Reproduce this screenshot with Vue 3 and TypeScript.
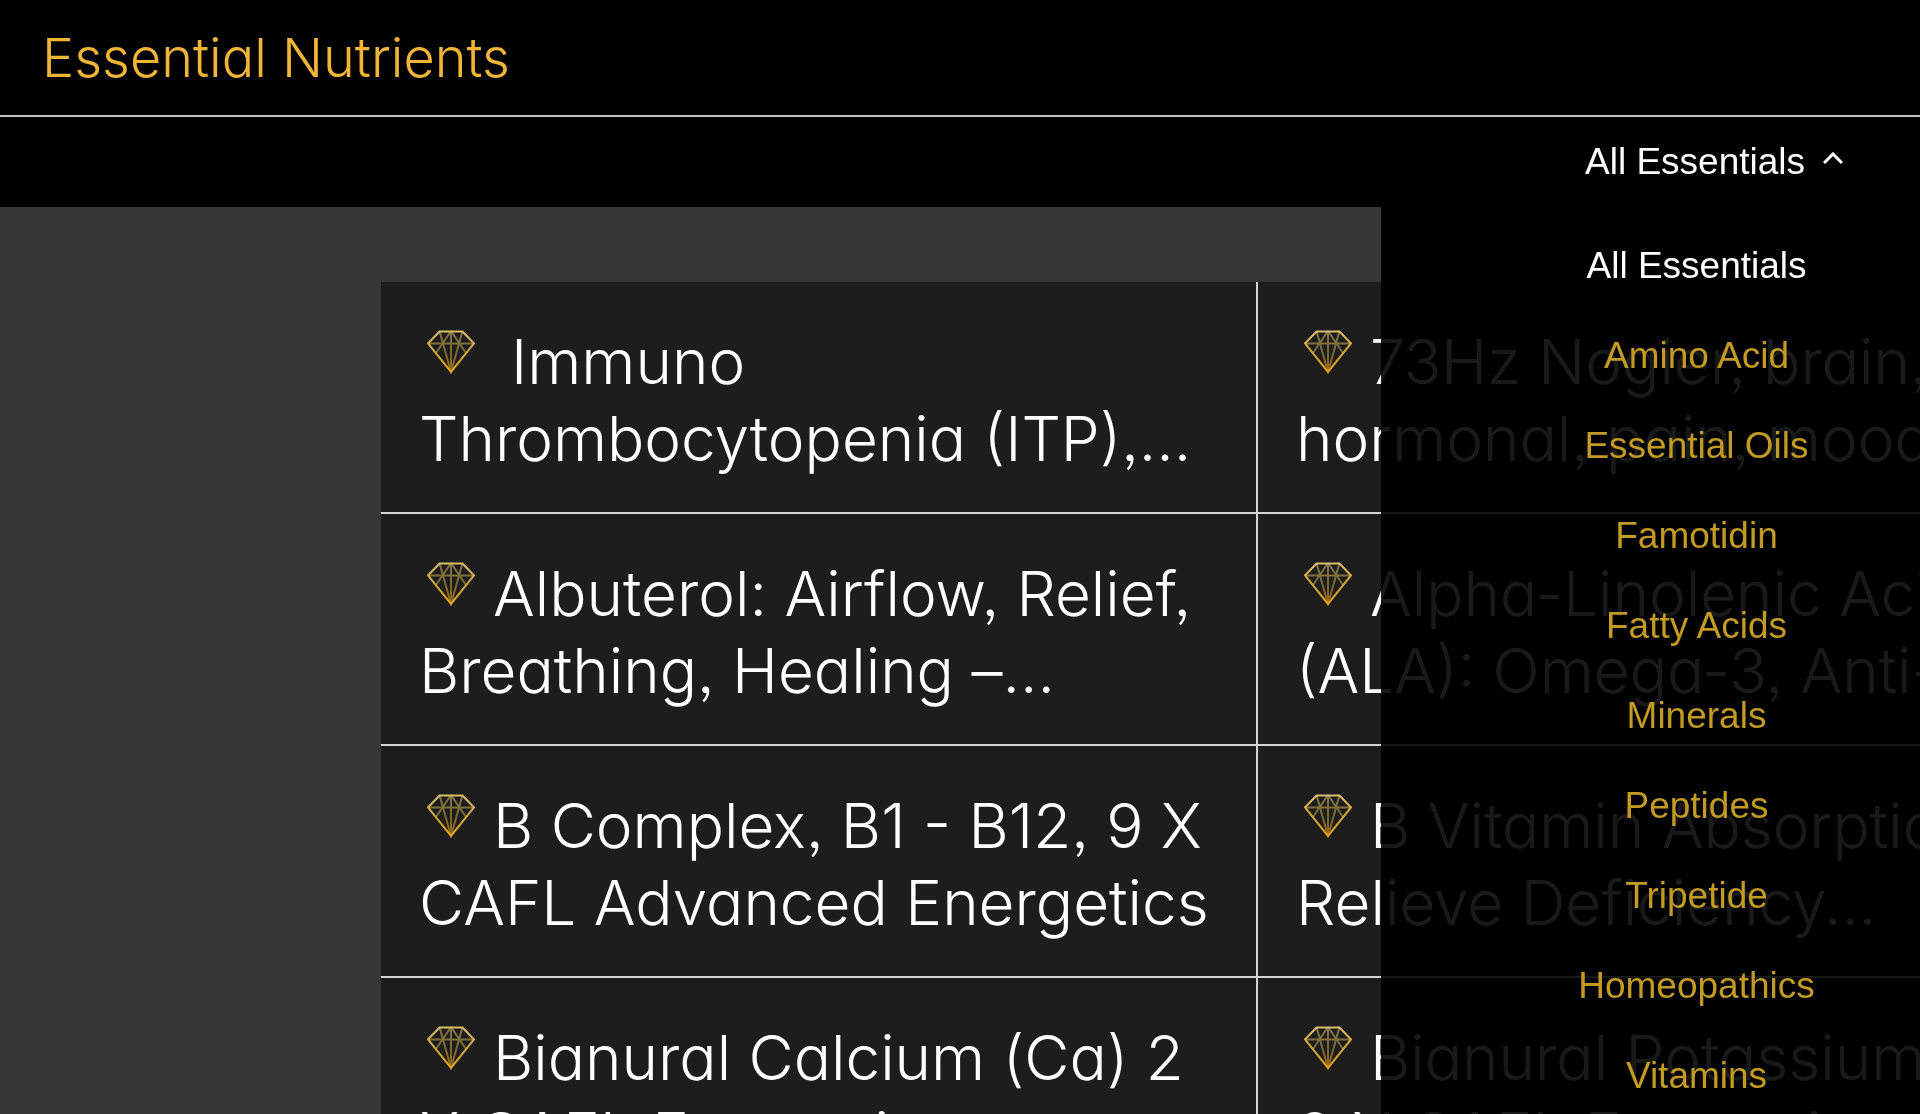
<script setup lang="ts">
import { ref } from 'vue'

interface Card {
  lines: string[]
  wide?: boolean
}

const categories: string[] = [
  'All Essentials',
  'Amino Acid',
  'Essential Oils',
  'Famotidin',
  'Fatty Acids',
  'Minerals',
  'Peptides',
  'Tripetide',
  'Homeopathics',
  'Vitamins',
]

const cards: Card[] = [
  { lines: ['Immuno', 'Thrombocytopenia (ITP),...'], wide: true },
  { lines: ['73Hz Nogier, brain,', 'hormonal, pain, mood'] },
  { lines: ['Albuterol: Airflow, Relief,', 'Breathing, Healing –...'] },
  { lines: ['Alpha-Linolenic Acid', '(ALA): Omega-3, Anti-'] },
  { lines: ['B Complex, B1 - B12, 9 X', 'CAFL Advanced Energetics'] },
  { lines: ['B Vitamin Absorption', 'Relieve Deficiency...'] },
  { lines: ['Bianural Calcium (Ca) 2', 'X CAFL Energetics'] },
  { lines: ['Bianural Potassium', '2 X CAFL Energetics'] },
]

const selected = ref('All Essentials')
const open = ref(true)

function choose(name: string): void {
  selected.value = name
  open.value = false
}
</script>

<template>
  <div class="page">
    <header class="header">
      <h1 class="title">Essential Nutrients</h1>
    </header>

    <nav class="bar" aria-label="Categories">
      <div class="dropdown">
        <button class="trigger" type="button" :aria-expanded="open" aria-controls="menu" @click="open = !open">
          <span>{{ selected }}</span>
          <svg class="chevron" :class="{ down: !open }" viewBox="0 0 20 12" aria-hidden="true">
            <path d="M1 11 L10 2 L19 11" />
          </svg>
        </button>
        <ul v-if="open" id="menu" class="menu">
          <li v-for="name in categories" :key="name">
            <button class="item" :class="{ active: name === selected }" type="button" @click="choose(name)">
              {{ name }}
            </button>
          </li>
        </ul>
      </div>
    </nav>

    <main class="content">
      <svg class="defs" aria-hidden="true">
        <defs>
          <linearGradient id="gold" x1="0" y1="0" x2="0" y2="43" gradientUnits="userSpaceOnUse">
            <stop offset="0" stop-color="#d9c26a" />
            <stop offset="0.5" stop-color="#c9a83e" />
            <stop offset="1" stop-color="#f0a010" />
          </linearGradient>
        </defs>
      </svg>
      <div class="grid">
        <article v-for="card in cards" :key="card.lines[0]" class="card">
          <h2 class="name">
            <span class="line" :class="{ wide: card.wide }">
              <svg class="gem" viewBox="0 0 48 44" aria-hidden="true">
                <g class="facets">
                  <path d="M1 13.5H47M24 1V42M24 1L9 23M24 1L39 23M12.5 1L24 42L35.5 1" />
                </g>
                <path class="outline" d="M12.5 1.5H35.5L47 13.5L24 42L1 13.5Z" />
              </svg>
              {{ card.lines[0] }}
            </span>
            <span class="line">{{ card.lines[1] }}</span>
          </h2>
        </article>
      </div>
    </main>
  </div>
</template>

<style>
body {
  margin: 0;
  background: #363636;
}
</style>

<style scoped>
.page {
  height: 100vh;
  overflow: hidden;
  background: #363636;
  color: #fff;
  font-family: Inter, "Liberation Sans", sans-serif;
}

.title,
.name {
  font-weight: 300;
  font-feature-settings: "cv11", "ss03";
}

.header {
  box-sizing: border-box;
  height: 117px;
  padding: 24px 42px;
  border-bottom: 2px solid #c4c4c4;
  background: #000;
}

.title {
  margin: 0;
  color: #f0b537;
  font-size: 54px;
  line-height: 68px;
}

.bar {
  display: flex;
  justify-content: flex-end;
  height: 90px;
  background: #000;
}

.dropdown {
  position: relative;
  width: 28%;
  min-width: 539px;
  font-family: "Liberation Sans", Arial, sans-serif;
}

.trigger,
.item {
  width: 100%;
  border: 0;
  background: none;
  font: inherit;
  font-size: 37px;
  line-height: 44px;
  cursor: pointer;
}

.trigger {
  display: flex;
  align-items: center;
  gap: 18px;
  height: 90px;
  padding: 0 0 0 204px;
  color: #fff;
}

.chevron {
  width: 20px;
  height: 12px;
  margin-bottom: 8px;
}

.chevron.down {
  transform: rotate(180deg);
}

.chevron path {
  fill: none;
  stroke: #fff;
  stroke-width: 3;
}

.menu {
  position: absolute;
  z-index: 1;
  top: 90px;
  right: 0;
  left: 0;
  margin: 0;
  padding: 14px 0 14px 92px;
  background: rgba(0, 0, 0, 0.9);
  backdrop-filter: contrast(1.7);
  list-style: none;
}

.item {
  display: block;
  height: 90px;
  padding: 0;
  color: #c39a22;
  text-align: center;
}

.item.active {
  color: #fff;
}

.content {
  padding: 75px 0 0 381px;
}

.defs {
  position: absolute;
  width: 0;
  height: 0;
}

.grid {
  display: grid;
  grid-template-columns: repeat(2, minmax(877px, 46%));
}

.card {
  padding: 41px 38px 35px;
  border-right: 2px solid #d4d4d4;
  border-bottom: 2px solid #d4d4d4;
  background: #1d1d1d;
}

.name {
  margin: 0;
  font-size: 62px;
  line-height: 77px;
}

.line {
  display: flex;
  align-items: center;
  gap: 18px;
  height: 77px;
  white-space: nowrap;
}

.line.wide {
  gap: 36px;
}

.gem {
  width: 48px;
  height: 44px;
  margin: 0 0 20px 8px;
  fill: none;
  stroke: url(#gold);
}

.facets {
  stroke-width: 2;
  opacity: 0.55;
}

.outline {
  stroke-width: 2;
}
</style>
